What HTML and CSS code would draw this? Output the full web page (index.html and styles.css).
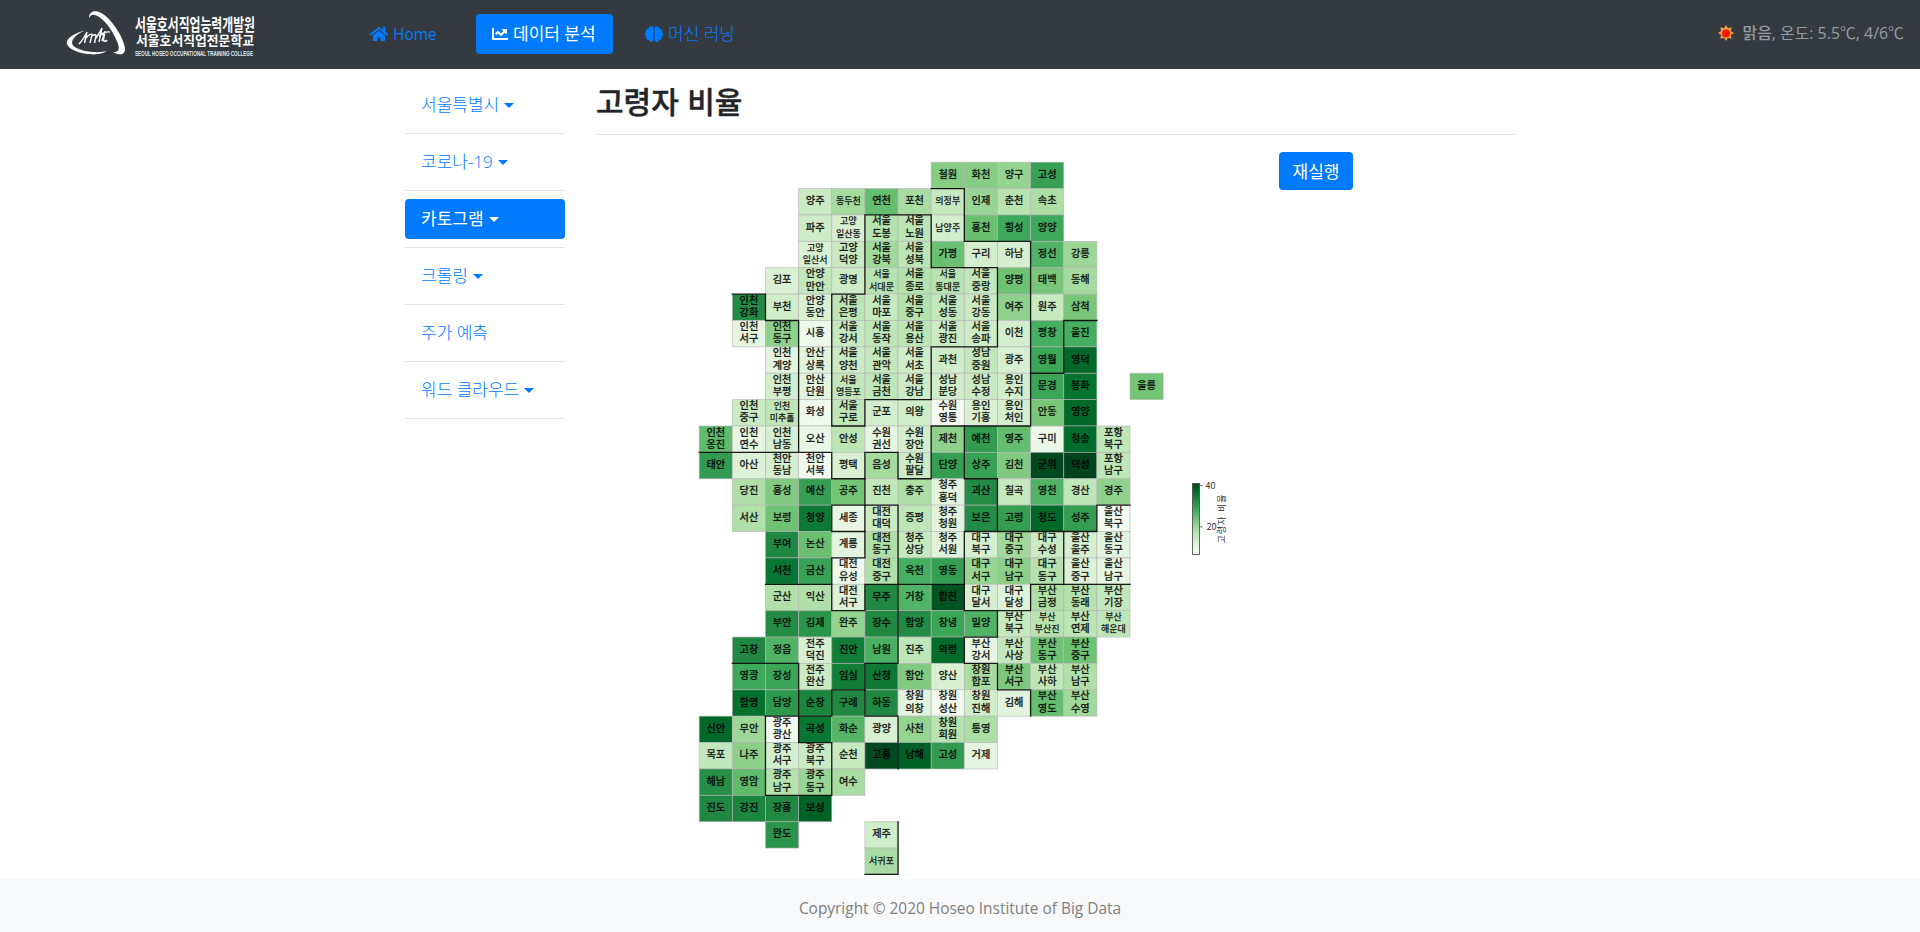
FILE: index.html
```html
<!DOCTYPE html>
<html lang="ko">
<head>
<meta charset="utf-8">
<title>고령자 비율</title>
<link rel="stylesheet" href="styles.css">
</head>
<body>
<header class="navbar">
  <svg class="logo" width="204" height="60" viewBox="0 0 204 60" aria-label="서울호서직업전문학교">
    <path d="M28 13C28 5 36 4 44 10.500C53 18 62 32 64 43C64.500 50 59 51 52 47C57 47.500 59 45 57 39C54 30 46 17 38 12C33 8.500 30 9 28 13Z" fill="#fff"/>
    <path d="M24 25.500C14 28 5.500 33 5.700 38C7 46 25 50 35 49.300C40 49 44 47.500 46 46C36 48.500 20 47 12.500 41C8.500 37 13 30 24 25.500Z" fill="#fff"/>
    <path d="M18 39C21 36 24 31 26 27L23.500 38M25 33C28 29 31 28.500 31 30L29 38M31 31C34 29 35 29.500 35 31L33.500 38M35 33C39 27 40 25 41 23L38 37M38 31C41 28.500 43 29 42.500 31L41 36M44 26L42.500 35C43 37 45 36.500 46 35M41 28.500C44 27 46 26.500 49 27" fill="none" stroke="#fff" stroke-width="1.400"/>
    <text class="logo-ko" x="74" y="26" textLength="120" lengthAdjust="spacingAndGlyphs">서울호서직업능력개발원</text>
    <text class="logo-ko second" x="75" y="40" textLength="118" lengthAdjust="spacingAndGlyphs">서울호서직업전문학교</text>
    <text class="logo-en" x="74" y="51" textLength="118" lengthAdjust="spacingAndGlyphs">SEOUL HOSEO OCCUPATIONAL TRAINING COLLEGE</text>
  </svg>
  <nav class="menu">
    <a class="menu-link"><svg class="icon" width="18" height="16" viewBox="0 0 576 512"><path fill="currentColor" d="M281 149L96 300V464c0 9 7 16 16 16h112c9 0 16-7 16-16V368h96v96c0 9 7 16 16 16h112c9 0 16-7 16-16V300L295 149a12 12 0 0 0-14 0zM571 251L488 183V44c0-7-5-12-12-12h-56c-7 0-12 5-12 12v73L319 44a48 48 0 0 0-61 0L5 251c-5 4-6 12-2 17l26 31c4 5 12 6 17 2L281 107a12 12 0 0 1 14 0l235 194c5 4 13 3 17-2l26-31c4-5 3-13-2-17z"/></svg><span class="home">Home</span></a>
    <a class="menu-link active"><svg class="icon" width="16" height="16" viewBox="0 0 512 512"><path fill="currentColor" d="M496 384H64V80c0-9-7-16-16-16H16C7 64 0 71 0 80v336c0 18 14 32 32 32h464c9 0 16-7 16-16v-32c0-9-7-16-16-16zM464 96H346c-22 0-32 26-17 41l32 32-73 73-73-73c-13-13-33-13-46 0l-64 64c-6 6-6 16 0 22l23 23c6 6 16 6 23 0l41-42 73 73c13 13 33 13 46 0l96-96 32 32c15 15 41 5 41-17V112c0-9-7-16-16-16z"/></svg>데이터 분석</a>
    <a class="menu-link"><svg class="icon" width="18" height="16" viewBox="0 0 18 16"><path fill="currentColor" d="M8.500 1.500V14.500C7.500 16.500 4.500 16.200 3.800 14C1.700 14 .4 12 1 10.300C-.4 9 -.2 6.800 1 6C.6 4.200 1.700 2.900 3.300 2.700C3.600 .4 7.500-.8 8.500 1.500ZM9.500 1.500V14.500C10.500 16.500 13.500 16.200 14.200 14C16.300 14 17.600 12 17 10.300C18.400 9 18.200 6.800 17 6C17.400 4.200 16.300 2.900 14.700 2.700C14.400 .4 10.500-.8 9.500 1.500Z"/></svg>머신 러닝</a>
  </nav>
  <div class="weather">
    <svg class="sun" width="16" height="16" viewBox="0 0 16 16"><path fill="#f2a23c" d="M8 0L10 3.200L13.700 2.300L12.800 6L16 8L12.800 10L13.700 13.700L10 12.800L8 16L6 12.800L2.300 13.700L3.200 10L0 8L3.200 6L2.300 2.300L6 3.200Z"/><circle cx="8" cy="8.500" r="4" fill="#f51600"/></svg>
    <span><b>맑음</b>, 온도: 5.5℃, 4/6℃</span>
  </div>
</header>
<div class="page">
  <aside class="sidebar">
    <a class="side-link caret">서울특별시</a>
    <a class="side-link caret">코로나-19</a>
    <a class="side-link caret active">카토그램</a>
    <a class="side-link caret">크롤링</a>
    <a class="side-link">주가 예측</a>
    <a class="side-link caret">워드 클라우드</a>
  </aside>
  <main class="content">
    <h1 class="title">고령자 비율</h1>
    <div class="result">
      <svg class="map" id="map" width="560" height="727" viewBox="680 152 560 727"></svg>
      <button class="rerun">재실행</button>
    </div>
  </main>
</div>
<footer class="footer"><span>Copyright © 2020 Hoseo Institute of Big Data</span></footer>
<script src="map.js"></script>
</body>
</html>
```
FILE: styles.css
```css
* { box-sizing: border-box; }
body {
  margin: 0;
  height: 932px;
  display: flex;
  flex-direction: column;
  overflow: hidden;
  background: #fff;
  color: #212529;
  font: 16px/24px "Open Sans", "Noto Sans CJK KR", sans-serif;
}
.navbar {
  height: 69px;
  flex: none;
  display: flex;
  align-items: center;
  background: #343a40;
}
.logo { margin-left: 61px; flex: none; overflow: visible; }
.logo-ko { font: 700 17px "Noto Sans CJK KR", sans-serif; fill: #fff; }
.logo-ko.second { font-size: 13px; }
.logo-en { font: 700 7.500px "Liberation Sans", sans-serif; fill: #fff; fill-opacity: .9; }
.menu { display: flex; gap: 8px; margin: 0 0 1px 89px; }
.menu-link {
  display: flex;
  align-items: center;
  height: 40px;
  padding: 0 16px;
  border-radius: 4px;
  color: #007bff;
  white-space: nowrap;
}
.menu-link:nth-child(1) { width: 114px; }
.menu-link:nth-child(2) { width: 137px; margin-right: 8px; font-size: 17px; }
.menu-link:nth-child(3) { font-size: 17px; font-weight: 300; }
.home { font-size: 15.500px; }
.icon { margin-right: 5px; flex: none; }
.weather {
  display: flex;
  align-items: center;
  gap: 9px;
  margin: 0 16px 4px auto;
  color: #9a9da0;
  white-space: nowrap;
  font-size: 15.900px;
}
.weather b { font-weight: 500; }
.page { display: flex; flex: 1; min-height: 0; padding-left: 405px; }
.sidebar { width: 160px; padding-top: 16px; flex: none; }
.side-link {
  display: flex;
  align-items: center;
  position: relative;
  height: 40px;
  margin-bottom: 17px;
  padding-left: 16px;
  border-radius: 4px;
  color: #007bff;
  font-size: 17px;
  font-weight: 300;
}
.side-link::before {
  content: "";
  position: absolute;
  left: 0;
  right: 0;
  top: 48px;
  height: 1px;
  background: #e5e5e5;
}
.caret::after {
  content: "";
  margin-left: 5px;
  border: 5px solid transparent;
  border-top-color: currentColor;
  border-bottom: 0;
}
.active { background: #007bff; color: #fff; }
.menu-link.active, .side-link.active { color: #fff; font-weight: 400; }
.content { margin-left: 31px; width: 919px; }
.title {
  height: 66px;
  margin: 0 0 17px;
  padding-top: 11px;
  border-bottom: 1px solid #e5e5e5;
  font: 500 30px/40px "Noto Sans CJK KR", sans-serif;
  -webkit-text-stroke: .4px #212529;
}
.result { display: flex; align-items: flex-start; }
.map { margin-left: 84px; flex: none; }
.map text { font-family: "Noto Sans CJK KR", sans-serif; text-anchor: middle; fill: #000; fill-opacity: .86; }
.map .name { font-size: 10.200px; font-weight: 500; stroke: #000; stroke-opacity: .6; stroke-width: .35; }
.map .small { font-size: 9px; stroke-width: .25; }
.map .axis { font-size: 9px; }
.map .cell { stroke: #b4b4b4; stroke-opacity: .75; stroke-width: .8; }
.map .border { fill: none; stroke: #000; stroke-opacity: .88; stroke-width: 1.300; stroke-linecap: square; }
.rerun {
  margin-left: 39px;
  width: 74px;
  height: 38px;
  padding: 0;
  border: 0;
  border-radius: 4px;
  background: #007bff;
  color: #fff;
  font: 17px/24px "Noto Sans CJK KR", sans-serif;
}
.footer {
  height: 53px;
  flex: none;
  display: flex;
  align-items: center;
  justify-content: center;
  padding-top: 4px;
  background: #f8f9fa;
  color: #808080;
  font-size: 15.450px;
  position: relative;
}
```
FILE: map.js
```js
// Each row: [first column, "name shade, name shade, ..."]; shade is a position on the 0-8 green ramp.
const rows = [
  [7, "철원 3.6,화천 3.6,양구 3.3,고성 5.3"],
  [3, "양주 1.9,동두천 2.9,연천 4.3,포천 2.8,의정부 2,인제 3.2,춘천 2.4,속초 2.7"],
  [3, "파주 1.8,고양/일산동 1.5,서울/도봉 2.5,서울/노원 2.3,남양주 1.6,홍천 4.2,횡성 5.1,양양 5.1"],
  [3, "고양/일산서 1.4,고양/덕양 1.9,서울/강북 3,서울/성북 2.3,가평 4.2,구리 1.6,하남 1.5,정선 4.7,강릉 3.1"],
  [2, "김포 1.4,안양/만안 2.1,광명 1.8,서울/서대문 2.4,서울/종로 2.5,서울/동대문 2.4,서울/중랑 2.1,양평 4.1,태백 3.9,동해 2.9"],
  [1, "인천/강화 6,부천 1.7,안양/동안 1.4,서울/은평 2.3,서울/마포 2,서울/중구 2.5,서울/성동 2.1,서울/강동 1.9,여주 3.4,원주 2,삼척 3.9"],
  [1, "인천/서구 1,인천/동구 3.4,시흥 .5,서울/강서 2,서울/동작 2.2,서울/용산 2.3,서울/광진 1.9,서울/송파 1.8,이천 1.6,평창 4.9,울진 4.9"],
  [2, "인천/계양 1.1,안산/상록 1.2,서울/양천 1.9,서울/관악 2.1,서울/서초 1.7,과천 1.7,성남/중원 2.1,광주 1.5,영월 5.2,영덕 7.1"],
  [2, "인천/부평 1.6,안산/단원 1.1,서울/영등포 2.1,서울/금천 2.2,서울/강남 1.8,성남/분당 1.7,성남/수정 1.9,용인/수지 1.6,문경 5.2,봉화 6.8,-,울릉 4"],
  [1, "인천/중구 1.9,인천/미추홀 2.2,화성 .4,서울/구로 2.2,군포 1.6,의왕 1.7,수원/영통 .1,용인/기흥 1.4,용인/처인 1.6,안동 3.9,영양 7.1"],
  [0, "인천/옹진 4.4,인천/연수 1,인천/남동 1.5,오산 .7,안성 2.3,수원/권선 .9,수원/장안 1.6,제천 3.4,예천 5.5,영주 4.3,구미 .7,청송 7,포항/북구 2.2"],
  [0, "태안 5.5,아산 1.3,천안/동남 1.5,천안/서북 .3,평택 1.4,음성 2.9,수원/팔달 1.8,단양 5.4,상주 5.3,김천 3.7,군위 7.9,의성 8,포항/남구 2.2"],
  [1, "당진 2.6,홍성 3.7,예산 5.4,공주 4,진천 2.1,충주 2.7,청주/흥덕 1.1,괴산 6,칠곡 2,영천 4.7,경산 2.2,경주 3.4"],
  [1, "서산 2.6,보령 4.1,청양 6.6,세종 .8,대전/대덕 1.9,증평 2.2,청주/청원 1.1,보은 6,고령 5.4,청도 7.1,성주 5.4,울산/북구 .2"],
  [2, "부여 6.1,논산 4.2,계룡 1.1,대전/동구 2.6,청주/상당 2,청주/서원 1.2,대구/북구 1.5,대구/중구 3,대구/수성 1.9,울산/울주 1.5,울산/동구 1.1"],
  [2, "서천 6.7,금산 5.3,대전/유성 .5,대전/중구 2.6,옥천 4.9,영동 5.4,대구/서구 3.2,대구/남구 3.5,대구/동구 2.5,울산/중구 1.3,울산/남구 1"],
  [2, "군산 2.6,익산 2.6,대전/서구 1.3,무주 6.1,거창 4.7,합천 7.6,대구/달서 1.5,대구/달성 1.2,부산/금정 2.7,부산/동래 2.5,부산/기장 2.1"],
  [2, "부안 6,김제 5.7,완주 3.3,장수 6.1,함양 6,창녕 5.2,밀양 4.7,부산/북구 2,부산/부산진 2.4,부산/연제 2.3,부산/해운대 2.2"],
  [1, "고창 6.1,정읍 4.7,전주/덕진 1.5,진안 6.5,남원 4.8,진주 2.2,의령 7,부산/강서 1,부산/사상 2.1,부산/동구 4.1,부산/중구 4.1"],
  [1, "영광 5.1,장성 5.2,전주/완산 1.9,임실 6.5,산청 6.6,함안 3.7,양산 1.4,창원/합포 2.8,부산/서구 3.8,부산/사하 2.2,부산/남구 2.6"],
  [1, "함평 6.9,담양 5.6,순창 6.2,구례 6.1,하동 6.1,창원/의창 1.1,창원/성산 .3,창원/진해 1.7,김해 1.1,부산/영도 4.3,부산/수영 3"],
  [0, "신안 7.1,무안 3.1,광주/광산 .3,곡성 6.7,화순 4.6,광양 1.5,사천 3.3,창원/회원 2.4,통영 2.7"],
  [0, "목포 2.1,나주 3.5,광주/서구 1.6,광주/북구 1.9,순천 2,고흥 7.9,남해 7.3,고성 5.5,거제 1"],
  [0, "해남 5.9,영암 4.4,광주/남구 2.5,광주/동구 3.2,여수 2.8"],
  [0, "진도 6.1,강진 6.2,장흥 6.1,보성 7.3"],
  [2, "완도 5.7,-,-,제주 1.7"],
  [5, "서귀포 2.8"]
];
const borders = [
  "7,1 8,1 8,3 10,3 10,10 7,10 7,12 6,12 6,11 5,11 5,12 4,12 4,11 0,11",
  "5,2 7,2 7,4 9,4 9,7 7,7 7,9 5,9 5,10 4,10 4,5 5,5 5,2",
  "1,5 2,5 2,6 3,6 3,11",
  "12,6 11,6 11,8 10,8",
  "8,10 8,12 9,12 9,14",
  "13,13 12,13 12,14 8,14 8,17 10,17 10,16 13,16",
  "11,14 11,16",
  "5,12 5,15 4,15 4,17 5,17 5,16 8,16",
  "5,14 4,14 4,13 6,13 6,19 5,19 5,21 6,21 6,23",
  "2,16 4,16",
  "1,19 3,19 3,21",
  "2,21 4,21 4,20 5,20",
  "3,21 3,22 4,22 4,24 2,24 2,21",
  "9,17 9,18 8,18 8,19 9,19 9,20 10,20 10,21",
  "6,25 6,27 5,27"
];
const ramp = ["f7fcf5", "e5f5e0", "c7e9c0", "a1d99b", "74c476", "41ab5d", "238b45", "006d2c", "00441b"]
  .map(h => [0, 2, 4].map(i => parseInt(h.slice(i, i + 2), 16)));
function shade(v) {
  const i = Math.min(7, Math.floor(v)), t = v - i;
  return `rgb(${ramp[i].map((c, k) => Math.round(c + (ramp[i + 1][k] - c) * t)).join(",")})`;
}
const X = c => +(699.2 + 33.14 * c).toFixed(2);
const Y = r => +(162.2 + 26.38 * r).toFixed(2);
let out = "", labels = "";
rows.forEach(([start, list], r) => list.split(",").forEach((item, i) => {
  if (item === "-") return;
  const [name, v] = item.split(" "), c = start + i, lines = name.split("/");
  out += `<rect class="cell" x="${X(c)}" y="${Y(r)}" width="33.14" height="26.38" fill="${shade(+v)}"/>`;
  const small = lines.some(l => l.length > 2) ? " small" : "";
  lines.forEach((l, k) => {
    const y = lines.length === 1 ? Y(r) + 15.7 : Y(r) + 9.5 + 12.3 * k;
    labels += `<text class="name${small}" x="${X(c) + 16.6}" y="${y.toFixed(2)}">${l}</text>`;
  });
}));
borders.forEach(b => {
  out += `<polyline class="border" points="${b.split(" ").map(p => { const [c, r] = p.split(","); return X(c) + "," + Y(r); }).join(" ")}"/>`;
});
out += labels;
out += `<defs><linearGradient id="g" x1="0" y1="1" x2="0" y2="0">${ramp.map((c, i) => `<stop offset="${i / 8}" stop-color="rgb(${c})"/>`).join("")}</linearGradient></defs>
<rect x="1192.5" y="483.500" width="7" height="71" fill="url(#g)" stroke="#444" stroke-width=".8"/>
<path d="M1199.500 485.500h3M1199.500 526.800h3" stroke="#444" stroke-width=".8"/>
<text class="axis" x="1210.500" y="488.800">40</text><text class="axis" x="1211.500" y="530">20</text>
<text class="axis" transform="translate(1225 519) rotate(-90)" textLength="49">고령자 비율</text>`;
document.getElementById("map").innerHTML = out;
```
